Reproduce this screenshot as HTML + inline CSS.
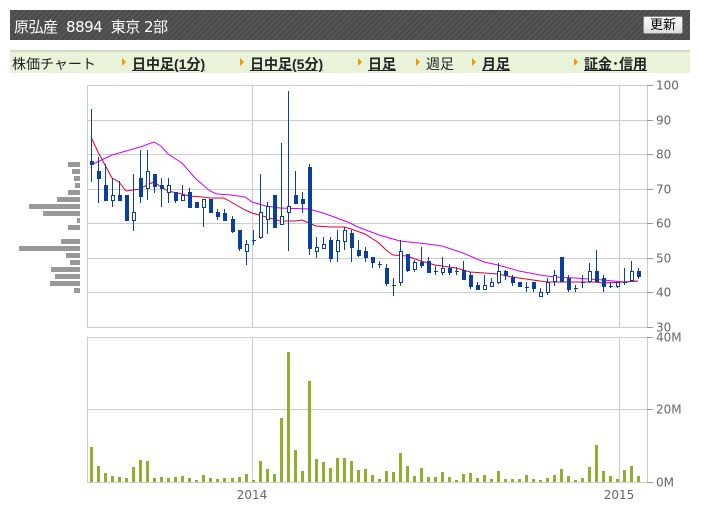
<!DOCTYPE html>
<html><head><meta charset="utf-8">
<style>
body{margin:0;background:#fff;width:701px;height:519px;overflow:hidden;font-family:"Liberation Sans","Noto Sans CJK JP",sans-serif;position:relative}
#hd{position:absolute;left:10px;top:10px;width:680px;height:30px;background:repeating-linear-gradient(135deg,#4a4a4a 0 2px,#555 2px 4px)}
#hd .t{position:absolute;left:4px;top:6px;color:#fff;font-size:15px;font-family:"DejaVu Sans","Noto Sans CJK JP",sans-serif;letter-spacing:-0.5px}
#btn{position:absolute;left:633px;top:6px;width:38px;height:16px;background:linear-gradient(#fff,#ddd);border:1px solid #888;border-radius:2px;font-size:13px;line-height:16px;text-align:center;color:#000}
#nav{position:absolute;left:10px;top:50px;width:680px;height:23px;background:#e9f3d9;border-top:2px solid #cfdcbc;box-sizing:border-box;font-size:14px;color:#222}
#nav span{position:absolute;top:2px;white-space:nowrap}
#nav b{text-decoration:underline;color:#222}
#nav i{position:absolute;top:6px;width:0;height:0;border-left:4px solid #f39800;border-top:4px solid transparent;border-bottom:4px solid transparent}
svg{position:absolute;left:0;top:0}
</style></head><body>
<div id="hd"><div class="t">原弘産&nbsp; 8894&nbsp; 東京 2部</div><div id="btn">更新</div></div>
<div id="nav">
<span style="left:2px">株価チャート</span>
<i style="left:112px"></i><span style="left:122px"><b>日中足(1分)</b></span>
<i style="left:230px"></i><span style="left:240px"><b>日中足(5分)</b></span>
<i style="left:348px"></i><span style="left:358px"><b>日足</b></span>
<i style="left:406px"></i><span style="left:416px">週足</span>
<i style="left:462px"></i><span style="left:472px"><b>月足</b></span>
<i style="left:564px"></i><span style="left:574px"><b>証金･信用</b></span>
</div>
<svg id="s" width="701" height="519" xmlns="http://www.w3.org/2000/svg" font-family="DejaVu Sans, sans-serif"></svg>
<script>
var s=document.getElementById('s'),h='';
function L(x1,y1,x2,y2,c,w){h+='<line x1="'+x1+'" y1="'+y1+'" x2="'+x2+'" y2="'+y2+'" stroke="'+c+'" stroke-width="'+(w||1)+'"/>';}
function R(x,y,w,hh,f,st){h+='<rect x="'+x+'" y="'+y+'" width="'+w+'" height="'+hh+'" fill="'+f+'"'+(st?' stroke="'+st+'" stroke-width="1"':'')+'/>';}
function T(x,y,t,a){h+='<text x="'+x+'" y="'+y+'" font-size="12" fill="#666"'+(a?' text-anchor="'+a+'"':'')+'>'+t+'</text>';}
var g='#cccccc';
R(87.5,85.5,560,242,'#fff',g);
for(var i=1;i<7;i++){var y=Math.round(85+i*241.5/7)+.5;L(87,y,647,y,g);}
L(252.5,85,252.5,327,g);L(619.5,85,619.5,327,g);
var labs=[100,90,80,70,60,50,40,30];
for(var i=0;i<8;i++){var y=Math.round(85+i*241.5/7)+.5;L(647,y,653,y,'#999');T(656,y+4,labs[i]);}
R(87.5,337.5,560,145,'#fff',g);
L(87,409.5,647,409.5,g);L(252.5,337,252.5,482,g);L(619.5,337,619.5,482,g);
[[337.5,'40M'],[409.5,'20M'],[482.5,'0M']].forEach(function(a){L(647,a[0],653,a[0],'#999');T(656,a[0]+4,a[1]);});
T(252,499,'2014','middle');T(619,499,'2015','middle');
var vp=[68,72,74,75,68,57,29,43,77,68,0,61,19,66,70,51,55,50,74];
vp.forEach(function(l,i){if(l)R(l,162+i*7,80-l,5,'#999');});
var red=[[91,137],[98,152],[105,165],[112,178],[119,182],[126,191],[133,190],[140,189],[147,185],[154,182],[161,187],[168,191],[182,194],[189,196],[203,197],[210,198],[224,198],[231,202],[245,210],[252,213],[266,217],[280,221],[295,221],[302,220],[309,223],[316,226],[330,227],[344,227],[351,229],[365,234],[379,243],[386,250],[393,255],[407,256],[421,261],[435,265],[456,268],[470,272],[484,273],[498,274],[512,277],[533,280],[547,282],[575,282],[596,282],[603,283],[624,282],[638,281]];
var mag=[[91,165],[112,155],[126,151],[140,147],[154,142],[161,146],[168,154],[182,163],[196,179],[210,191],[217,194],[231,195],[245,197],[252,202],[266,206],[280,208],[309,209],[323,213],[337,218],[350,223],[358,227],[379,235],[400,241],[428,244],[442,246],[463,253],[484,262],[498,265],[519,271],[540,275],[554,277],[575,278],[603,280],[624,282],[638,281]];
function P(a,c){h+='<polyline fill="none" stroke="'+c+'" stroke-width="1" points="'+a.map(function(p){return p.join(',')}).join(' ')+'"/>';}
P(mag,'#cc00ff');P(red,'#dd0033');
var c=[[109,182,161,165,1],[157,203,171,179,1],[164,201,185,201,1],[178,207,195,201,0],[181,201,195,201,1],[195,221,195,221,1],[174,231,212,221,0],[150,203,178,197,1],[150,200,171,189,0],[174,193,174,187,1],[178,207,185,189,1],[178,203,185,193,0],[192,203,192,201,1],[185,201,195,201,0],[188,208,192,208,1],[202,208,202,208,1],[199,227,199,208,0],[199,213,199,213,1],[209,220,212,217,1],[209,221,213,221,1],[216,233,219,232,1],[230,251,230,249,1],[240,265,244,252,0],[230,245,240,241,1],[174,239,212,238,0],[202,234,206,220,0],[195,228,195,228,1],[143,225,216,225,0],[91,251,206,213,0],[171,204,195,204,1],[192,213,199,204,1],[164,255,167,249,1],[237,258,247,252,0],[237,249,244,249,0],[237,262,240,259,1],[230,262,240,252,0],[227,250,230,242,0],[230,262,233,248,1],[240,257,250,256,1],[247,262,251,258,1],[257,268,257,263,1],[261,268,264,265,1],[264,286,268,284,1],[278,296,285,286,1],[240,286,251,283,0],[254,272,254,271,1],[260,272,262,270,0],[247,268,262,266,1],[257,273,261,273,1],[266,275,271,272,1],[257,275,268,273,0],[264,275,268,273,1],[267,275,271,272,1],[261,280,270,280,1],[272,289,275,287,1],[282,290,285,290,1],[275,290,285,290,0],[278,287,282,287,0],[263,284,271,283,0],[270,280,271,276,1],[275,286,277,283,1],[282,287,282,287,1],[282,292,287,288,1],[282,292,282,289,1],[288,297,292,297,0],[278,295,282,293,0],[270,286,275,282,0],[257,282,257,282,1],[275,292,278,290,1],[285,292,288,289,1],[275,288,282,283,1],[263,283,271,282,0],[250,283,271,282,1],[275,292,278,287,1],[282,288,286,287,1],[282,288,282,287,0],[268,285,282,283,1],[261,282,271,281,0],[268,279,271,277,1]];
var B='#0a3fa0';
c.forEach(function(d,i){var x=Math.round(91.3+i*7.01);L(x+.5,d[0],x+.5,d[1],B);var bh=Math.max(1,d[3]-d[2]);
 if(d[4])R(x-1,d[2],4,bh,B);else R(x-.5,d[2]+.5,3,bh-1<1?1:bh-1,'#fff',B);});
var v=[35,16,9,6,5,4,15,22,21,4,5,4,5,6,4,2,7,4,3,4,4,5,8,2,21,13,8,64,130,32,11,101,23,20,14,24,24,21,12,13,7,3,11,10,29,16,6,14,5,5,10,5,2,8,9,4,7,3,11,3,3,3,7,3,2,4,7,13,6,2,4,15,37,11,6,3,12,16,6];
v.forEach(function(hh,i){var x=Math.round(91.3+i*7.01)-1;R(x,482-hh,3,hh,'#8db12e');});
s.innerHTML=h;
</script>
</body></html>
